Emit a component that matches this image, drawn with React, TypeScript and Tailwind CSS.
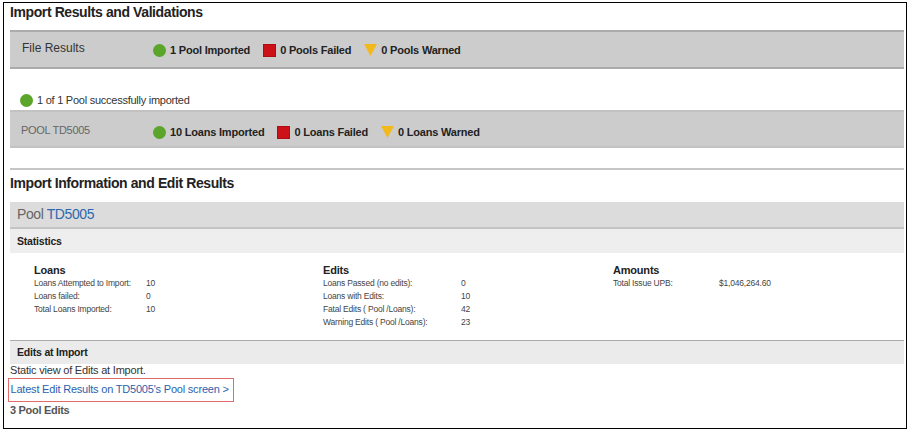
const GREEN = "bg-[#5aa52a]";

type Status = { kind: "ok" | "fail" | "warn"; label: string };

const FILE_STATUS: Status[] = [
  { kind: "ok", label: "1 Pool Imported" },
  { kind: "fail", label: "0 Pools Failed" },
  { kind: "warn", label: "0 Pools Warned" },
];

const POOL_STATUS: Status[] = [
  { kind: "ok", label: "10 Loans Imported" },
  { kind: "fail", label: "0 Loans Failed" },
  { kind: "warn", label: "0 Loans Warned" },
];

const STATS = [
  {
    title: "Loans",
    labelWidth: "w-[112px]",
    rows: [
      ["Loans Attempted to Import:", "10"],
      ["Loans failed:", "0"],
      ["Total Loans Imported:", "10"],
    ],
  },
  {
    title: "Edits",
    labelWidth: "w-[138px]",
    rows: [
      ["Loans Passed (no edits):", "0"],
      ["Loans with Edits:", "10"],
      ["Fatal Edits ( Pool /Loans):", "42"],
      ["Warning Edits ( Pool /Loans):", "23"],
    ],
  },
  {
    title: "Amounts",
    labelWidth: "w-[106px]",
    rows: [["Total Issue UPB:", "$1,046,264.60"]],
  },
];

const StatusIcon = ({ kind }: { kind: Status["kind"] }) => {
  if (kind === "ok") return <span className={`block w-[13px] h-[13px] rounded-full ${GREEN}`} />;
  if (kind === "fail") return <span className="block w-[13px] h-[13px] bg-[#cc1118] border border-[#b00d12]" />;
  return (
    <svg width="13" height="12" viewBox="0 0 13 12" className="block">
      <polygon points="0,0 13,0 6.5,12" fill="#f1b91c" />
    </svg>
  );
};

const StatusList = ({ items }: { items: Status[] }) => (
  <div className="flex items-center gap-[13px]">
    {items.map((s) => (
      <div key={s.label} className="flex items-center gap-[4px]">
        <StatusIcon kind={s.kind} />
        <span className="text-[11px] leading-[16px] font-bold tracking-[-0.2px] text-[#222]">{s.label}</span>
      </div>
    ))}
  </div>
);

export default function App() {
  return (
    <div
      className="w-[911px] h-[433px] bg-white pt-[2px] pl-[3px]"
      style={{ fontFamily: '"Liberation Sans", Arial, sans-serif' }}
    >
      <div className="w-[904px] h-[427px] border border-black pl-[6px] pr-[2px] text-[#333]">
        <h2 className="text-[14px] leading-[18px] font-bold tracking-[-0.4px] text-[#222]">
          Import Results and Validations
        </h2>

        {/* file results */}
        <div className="mt-[9px] h-[39px] flex border-y-2 border-[#ababab] bg-[#cccccc] pl-[12px]">
          <div className="w-[131px] pt-[8px] text-[12px] leading-[16px] text-[#333]">File Results</div>
          <div className="pt-[10px]">
            <StatusList items={FILE_STATUS} />
          </div>
        </div>

        <div className="mt-[23px] h-[16px] flex items-center gap-[4px] pl-[10px]">
          <span className={`block w-[13px] h-[13px] rounded-full ${GREEN}`} />
          <span className="text-[11px] tracking-[-0.25px] text-[#333]">1 of 1 Pool successfully imported</span>
        </div>

        <div className="mt-[2px] h-[38px] flex border-y-2 border-[#c2c2c2] bg-[#cccccc] pl-[11px]">
          <div className="w-[132px] pt-[10px] text-[11px] leading-[16px] tracking-[-0.3px] text-[#666]">
            POOL TD5005
          </div>
          <div className="pt-[12px]">
            <StatusList items={POOL_STATUS} />
          </div>
        </div>

        <div className="mt-[20px] h-[2px] bg-[#c6c6c6]" />

        <h2 className="mt-[4px] text-[14px] leading-[18px] font-bold tracking-[-0.4px] text-[#222]">
          Import Information and Edit Results
        </h2>

        <div className="mt-[10px] h-[27px] border-b-2 border-[#c4c4c4] bg-[#dcdcdc] pl-[7px] text-[14px] leading-[25px] tracking-[-0.4px] text-[#666]">
          Pool <span className="text-[#2d68b0]">TD5005</span>
        </div>
        <div className="h-[24px] bg-[#eeeeee] pl-[7px] text-[10.5px] leading-[24px] font-bold tracking-[-0.2px] text-[#222]">
          Statistics
        </div>

        {/* statistics */}
        <div className="h-[87px] pt-[10px] pl-[24px] grid grid-cols-[289px_290px_1fr]">
          {STATS.map((col) => (
            <div key={col.title}>
              <div className="text-[11px] leading-[14px] font-bold tracking-[-0.2px] text-[#222]">{col.title}</div>
              {col.rows.map(([label, value]) => (
                <div key={label} className="flex text-[8.5px] leading-[13px] tracking-[-0.2px] text-[#444]">
                  <span className={col.labelWidth}>{label}</span>
                  <span>{value}</span>
                </div>
              ))}
            </div>
          ))}
        </div>

        <div className="h-[24px] border-t border-[#ababab] bg-[#ebebeb] pl-[7px] text-[10.5px] leading-[22px] font-bold tracking-[-0.2px] text-[#222]">
          Edits at Import
        </div>
        <p className="text-[11px] leading-[12px] tracking-[-0.2px] text-[#333]">Static view of Edits at Import.</p>

        <div className="mt-[2px] -ml-[2px] w-[226px] h-[24px] border-[1.5px] border-[#e46b6b] pl-[1.5px] text-[11px] leading-[21px] tracking-[-0.2px]">
          <a href="#" className="text-[#2d5fae]">
            Latest Edit Results on TD5005&apos;s Pool screen &gt;
          </a>
        </div>

        <p className="mt-[1px] text-[11px] leading-[14px] font-bold tracking-[-0.3px] text-[#555]">3 Pool Edits</p>
      </div>
    </div>
  );
}
